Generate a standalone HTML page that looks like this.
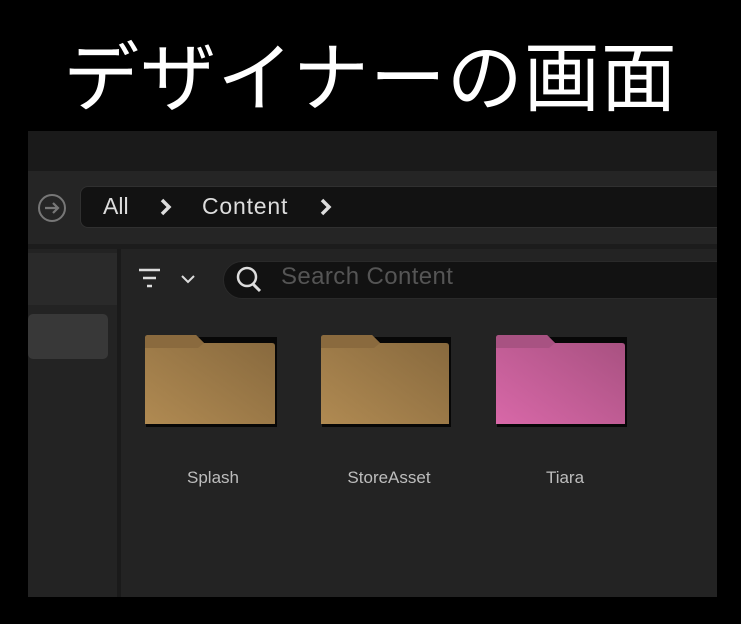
<!DOCTYPE html>
<html><head><meta charset="utf-8"><style>
*{margin:0;padding:0;box-sizing:border-box}
body{width:741px;height:624px;background:#000;position:relative;overflow:hidden;font-family:"Liberation Sans","Noto Sans CJK JP",sans-serif}
.t{position:absolute;left:0;width:741px;top:22px;text-align:center;color:#fff;font-size:76px;line-height:100px;font-family:"Noto Sans CJK JP",sans-serif;letter-spacing:1px}
.p{position:absolute;left:28px;top:131px;width:689px;height:466px;background:#232323;overflow:hidden}
.a{position:absolute}
.lbl{position:absolute;top:468px;color:#bdbdbd;font-size:17px;width:160px;text-align:center;margin-left:-80px}
</style></head><body>
<div class="t">デザイナーの画面</div>
<div class="p">
<div class="a" style="left:0;top:0;width:689px;height:40px;background:#1a1a1a"></div>
<div class="a" style="left:0;top:40px;width:689px;height:74px;background:#252525"></div>
<div class="a" style="left:52px;top:55px;width:660px;height:42px;background:#121212;border:1px solid #303030;border-radius:8px"></div>
<div class="a" style="left:0;top:113px;width:689px;height:5px;background:#1c1c1c"></div>
<div class="a" style="left:0;top:122px;width:89px;height:52px;background:#2a2a2a"></div>
<div class="a" style="left:0;top:183px;width:80px;height:45px;background:#383838;border-radius:5px"></div>
<div class="a" style="left:89px;top:118px;width:4px;height:348px;background:#1a1a1a"></div>
<div class="a" style="left:195px;top:130px;width:520px;height:38px;background:#121212;border:1px solid #2a2a2a;border-radius:19px"></div>
</div>
<svg class="a" style="left:0;top:0" width="741" height="624">
<circle cx="52" cy="208" r="13" fill="none" stroke="#777" stroke-width="2"/>
<path d="M45 208h13M53 203l5 5-5 5" fill="none" stroke="#777" stroke-width="2.2"/>
<path d="M162 200l7 7-7 7M322 200l7 7-7 7" fill="none" stroke="#ddd" stroke-width="3.5"/>
<path d="M139 270h21M143 278h13M147 286h5" stroke="#ddd" stroke-width="2.5"/>
<path d="M182 276l6 6 6-6" fill="none" stroke="#ddd" stroke-width="2"/>
<circle cx="247" cy="277" r="9" fill="none" stroke="#ddd" stroke-width="2.5"/>
<path d="M253 284l7 7" stroke="#ddd" stroke-width="3"/>
<defs>
<linearGradient id="g" x1="0" y1="1" x2="1" y2="0"><stop offset="0" stop-color="#b08a52"/><stop offset="1" stop-color="#86683d"/></linearGradient>
<linearGradient id="m" x1="0" y1="1" x2="1" y2="0"><stop offset="0" stop-color="#d868a8"/><stop offset="1" stop-color="#a6507f"/></linearGradient>
</defs>
<g>
<rect x="146" y="337" width="131" height="90" fill="#000" opacity=".8"/>
<path d="M145 338q0-3 3-3h48l8 8h68q3 0 3 3v78h-130z" fill="url(#g)"/>
<path d="M145 338q0-3 3-3h48l8 8-6 5h-53z" fill="#8a6a3e"/>
</g>
<g>
<rect x="322" y="337" width="129" height="90" fill="#000" opacity=".8"/>
<path d="M321 338q0-3 3-3h48l8 8h66q3 0 3 3v78h-128z" fill="url(#g)"/>
<path d="M321 338q0-3 3-3h48l8 8-6 5h-53z" fill="#8a6a3e"/>
</g>
<g>
<rect x="497" y="337" width="130" height="90" fill="#000" opacity=".8"/>
<path d="M496 338q0-3 3-3h48l8 8h67q3 0 3 3v78h-129z" fill="url(#m)"/>
<path d="M496 338q0-3 3-3h48l8 8-6 5h-53z" fill="#a85282"/>
</g>
</svg>
<div class="a" style="left:103px;top:193px;color:#ddd;font-size:23px">All</div>
<div class="a" style="left:202px;top:193px;color:#ddd;font-size:23px;letter-spacing:0.8px">Content</div>
<div class="a" style="left:281px;top:263px;color:#555;font-size:24px;letter-spacing:0.4px">Search Content</div>
<div class="lbl" style="left:213px">Splash</div>
<div class="lbl" style="left:389px">StoreAsset</div>
<div class="lbl" style="left:565px">Tiara</div>
</body></html>
